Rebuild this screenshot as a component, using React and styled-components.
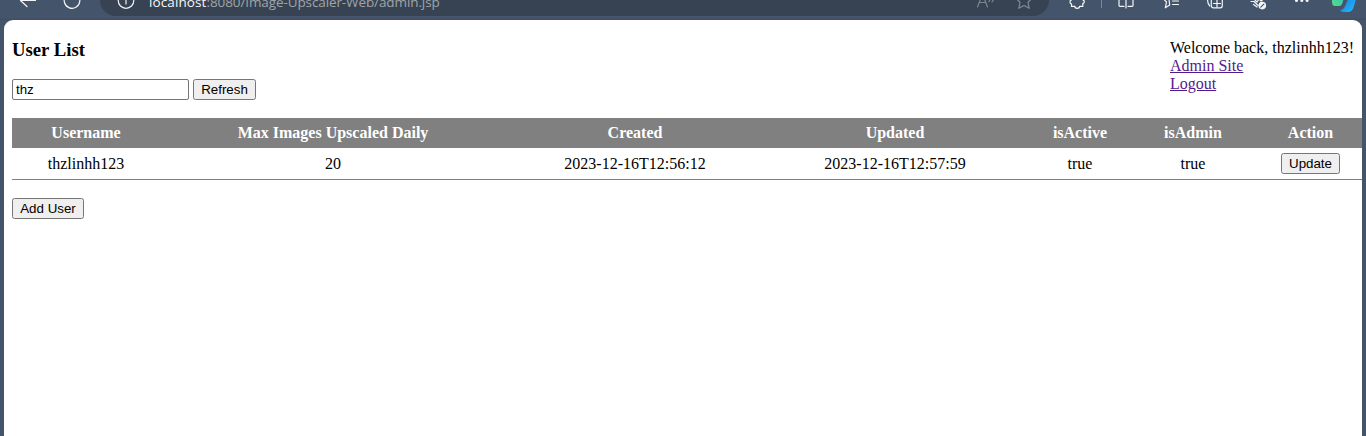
import React from 'react';
import styled, { createGlobalStyle } from 'styled-components';

const Global = createGlobalStyle`
  html, body { margin: 0; height: 100%; overflow: hidden; background: #44546a; }
  body { font: 16px/18px "Liberation Serif", "Times New Roman", serif; color: #000; }
`;

const Browser = styled.div`
  height: 436px;
  display: flex;
  flex-direction: column;
  overflow: hidden;
`;

const Toolbar = styled.header`
  height: 20px;
  flex: none;
  overflow: hidden;
  background: linear-gradient(#44546a 18px, #424c62 19px);
`;

const ToolRow = styled.div`
  display: flex;
  align-items: center;
  height: 32px;
  margin-top: -16px;
`;

const Icon = styled.svg`
  flex: none;
  width: ${(p) => p.$size || 20}px;
  height: ${(p) => p.$size || 20}px;
  margin-left: ${(p) => p.$gap || 0}px;
  fill: none;
  stroke: ${(p) => p.$color || '#f4f5f7'};
  stroke-width: 1.2;
  stroke-linecap: round;
  stroke-linejoin: round;
`;

const Address = styled.div`
  display: flex;
  align-items: center;
  box-sizing: border-box;
  width: 949px;
  height: 32px;
  margin-left: 18px;
  padding-left: 16px;
  border-radius: 16px;
  background: #374353;
`;

const Url = styled.span`
  width: 819px;
  margin: 3px 0 0 13px;
  font: 13.5px/20px "Open Sans", "Noto Sans", sans-serif;
  letter-spacing: -0.1px;
  white-space: nowrap;
  color: #a1a4a6;
`;

const Host = styled.span`
  color: #f5f6f7;
  letter-spacing: 0.1px;
`;

const Separator = styled.span`
  width: 1px;
  height: 16px;
  margin-left: 14px;
  background: #7b8796;
`;

const Page = styled.main`
  flex: 1;
  margin: 0 4px;
  padding: 18px 0 0 8px;
  border-radius: 9px 9px 0 0;
  background: #fff;
  overflow: hidden;
`;

const Top = styled.div`
  display: flex;
  justify-content: space-between;
  height: 80px;
`;

const Title = styled.h3`
  margin: 1px 0 18px;
  font-size: 18.72px;
  line-height: 22px;
`;

const Search = styled.form`
  display: flex;
  gap: 4px;
`;

const Field = styled.input`
  box-sizing: border-box;
  width: 177px;
  height: 21px;
  padding: 1px 3px;
  border: 1px solid #767676;
  border-radius: 2px;
  background: #fff;
  color: #000;
  font: 13.333px "Liberation Sans", Arial, sans-serif;
`;

const Button = styled.button`
  display: block;
  box-sizing: border-box;
  width: ${(p) => p.$width}px;
  height: 21px;
  margin: 0 auto;
  padding: 0;
  border: 1px solid #767676;
  border-radius: 2.5px;
  background: #efefef;
  color: #000;
  font: 13.333px/19px "Liberation Sans", Arial, sans-serif;
  white-space: nowrap;
`;

const Account = styled.nav`
  display: flex;
  flex-direction: column;
  align-items: flex-start;
  width: 192px;
  padding-top: 1px;
  white-space: nowrap;
`;

const Link = styled.a`
  color: #551a8b;
  text-decoration: underline;
`;

const Table = styled.table`
  table-layout: fixed;
  width: 1357px;
  border-collapse: collapse;
  margin-bottom: 18px;
  text-align: center;
`;

const HeadCell = styled.th`
  width: ${(p) => p.$width}px;
  height: 30px;
  padding: 0;
  background: #808080;
  color: #fff;
`;

const Cell = styled.td`
  height: 31px;
  padding: 0 0 1px;
  box-shadow: inset 0 -1px #808080;
`;

const Footer = styled.div`
  display: flex;
  justify-content: flex-start;
  width: 72px;
`;

const columns = [
  ['Username', 148], ['Max Images Upscaled Daily', 346], ['Created', 258],
  ['Updated', 262], ['isActive', 108], ['isAdmin', 118], ['Action', 117],
];
const users = [['thzlinhh123', '20', '2023-12-16T12:56:12', '2023-12-16T12:57:59', 'true', 'true']];

function BrowserBar() {
  return (
    <Toolbar>
      <ToolRow>
        <Icon viewBox="0 0 20 20" $gap={18}><path d="M17.5 10.5h-15M9 4l-6.5 6.5L9 16.5" /></Icon>
        <Icon viewBox="0 0 20 20" $gap={24}><path d="M15 4.5A7.8 7.8 0 1 1 10 2.7M15 1v4h-4" /></Icon>
        <Address>
          <Icon viewBox="0 0 20 20"><circle cx="10" cy="10.5" r="7.8" /><path d="M10 10v4M10 7v.2" /></Icon>
          <Url><Host>localhost</Host>:8080/Image-Upscaler-Web/admin.jsp</Url>
          <Icon viewBox="0 0 20 20" $gap={7} $color="#7e858c">
            <path d="M2.5 17L7.5 4l5 13M4.3 12.5h6.4M14 6.5q2 2 0 5M17 5q3 3 0 7" />
          </Icon>
          <Icon viewBox="0 0 20 20" $gap={19} $color="#858a90">
            <path d="M10 2l2.5 5.3 5.7.8-4.2 4.1 1.2 6.1L10 15.5l-5.2 2.8L6 12.2 1.8 8.1l5.7-.8z" />
          </Icon>
        </Address>
        <Icon viewBox="0 0 20 20" $gap={18}>
          <path d="M4.5 5v5c-2 .2-2 3.6 0 3.8v2.6h3.3c.2 2.6 4.6 2.6 4.8 0h3.2v-3c2-.2 2-3.2 0-3.6V5h-4c0-3-4-3-4 0z" />
        </Icon>
        <Separator />
        <Icon viewBox="0 0 20 20" $gap={14}>
          <path d="M8 3H3v12.5q0 .8.8.8H8M10 2v16M12 3h5v12.5q0 .8-.8.8H12" />
        </Icon>
        <Icon viewBox="0 0 20 20" $gap={25}>
          <path d="M10 2l2.3 5h5M11.5 11h6M11.5 14.5h6M8.7 15l-4.4 2.8 1.2-5.8-3.4-3.5L7.7 7z" />
        </Icon>
        <Icon viewBox="0 0 20 20" $gap={24}>
          <rect x="6.3" y="6" width="11" height="11.8" rx="2" />
          <path d="M12 10v7M8.5 13.5h7M4.8 16Q2.5 14 2.5 9" />
        </Icon>
        <Icon viewBox="0 0 20 20" $gap={24}>
          <path d="M2 11.5h3l4 4M4 8l4 4 2-3 2 2 4-3M4.5 14.5l3.5 2.5" />
          <circle cx="13.3" cy="15.6" r="3.2" fill="#f4f5f7" />
          <path d="M11.8 17.1l3-3" stroke="#44546a" />
        </Icon>
        <Icon viewBox="0 0 20 20" $gap={23}>
          <g fill="#f4f5f7" stroke="none"><circle cx="4.5" cy="10.5" r="1.5" /><circle cx="9.8" cy="10.5" r="1.5" /><circle cx="15.1" cy="10.5" r="1.5" /></g>
        </Icon>
        <Icon viewBox="0 0 24 24" $size={24} $gap={20} $color="none">
          <defs>
            <linearGradient id="teal" x1="0" y1="1" x2="1" y2="0"><stop stopColor="#59dc83" /><stop offset="1" stopColor="#25b9c8" /></linearGradient>
            <linearGradient id="azure" x1="0" y1="0" x2="1" y2="1"><stop stopColor="#1876dc" /><stop offset="1" stopColor="#24bdf8" /></linearGradient>
          </defs>
          <path d="M0 2h14l-3.5 13q-1 3-3.5 3H3q-3 0-3-4z" fill="url(#teal)" />
          <path d="M17.5 8h6.5v3l-2 7q-1.5 6-6 6h-4q-3 0-4-2 4 0 5.5-5z" fill="url(#azure)" />
        </Icon>
      </ToolRow>
    </Toolbar>
  );
}

export default function App() {
  return (
    <Browser>
      <Global />
      <BrowserBar />
      <Page>
        <Top>
          <div>
            <Title>User List</Title>
            <Search onSubmit={(e) => e.preventDefault()}>
              <Field defaultValue="thz" />
              <Button $width={63}>Refresh</Button>
            </Search>
          </div>
          <Account>
            <span>Welcome back, thzlinhh123!</span>
            <Link href="#">Admin Site</Link>
            <Link href="#">Logout</Link>
          </Account>
        </Top>
        <Table>
          <thead>
            <tr>{columns.map(([name, width]) => <HeadCell key={name} $width={width}>{name}</HeadCell>)}</tr>
          </thead>
          <tbody>
            {users.map((user) => (
              <tr key={user[0]}>
                {user.map((value, i) => <Cell key={i}>{value}</Cell>)}
                <Cell><Button $width={59}>Update</Button></Cell>
              </tr>
            ))}
          </tbody>
        </Table>
        <Footer><Button $width={72}>Add User</Button></Footer>
      </Page>
    </Browser>
  );
}
